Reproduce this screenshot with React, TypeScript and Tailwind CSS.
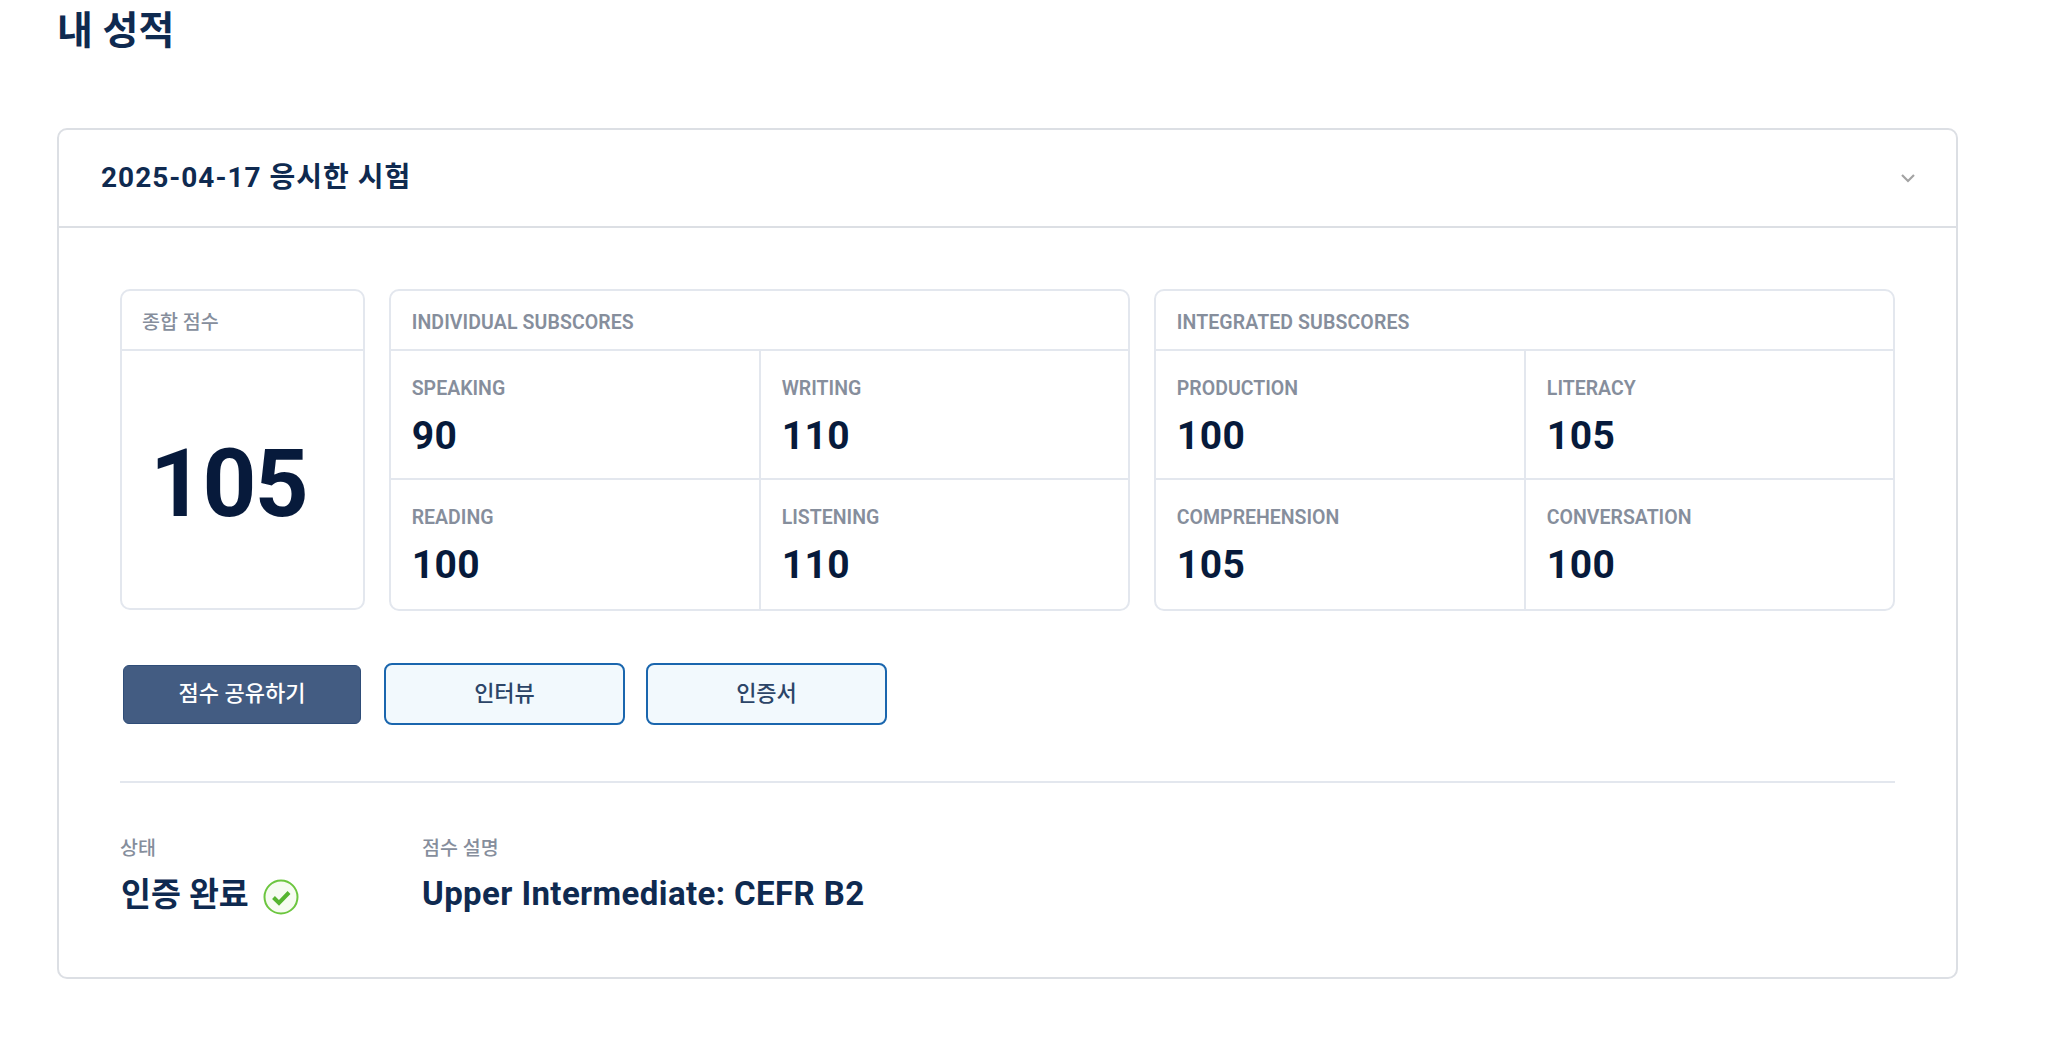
import React from "react";

const border = "border-2 border-[#e3e7ee]";

function Cell({ label, value, cls }: { label: string; value: string; cls: string }) {
  return (
    <div className={`h-[129px] pl-[21px] pt-[25px] ${cls}`}>
      <div className="text-[19.5px] leading-[26px] font-semibold text-[#868e9c]">{label}</div>
      <div className="mt-[9px] text-[39px] leading-[50px] font-bold tracking-[0.4px] text-[#071a3b]">{value}</div>
    </div>
  );
}

function ScoreBox({ title, items, cls }: { title: string; items: [string, string][]; cls: string }) {
  return (
    <div className={`${cls} rounded-[10px] ${border}`}>
      <div className="h-[60px] border-b-2 border-[#e3e7ee] pl-[21px] pt-[19px] text-[19.5px] leading-[26px] font-semibold tracking-[0.1px] text-[#868e9c]">
        {title}
      </div>
      <div className="grid grid-cols-[370px_1fr]">
        <Cell label={items[0][0]} value={items[0][1]} cls="border-r-2 border-b-2 border-[#e3e7ee]" />
        <Cell label={items[1][0]} value={items[1][1]} cls="border-b-2 border-[#e3e7ee]" />
        <Cell label={items[2][0]} value={items[2][1]} cls="border-r-2 border-[#e3e7ee]" />
        <Cell label={items[3][0]} value={items[3][1]} cls="" />
      </div>
    </div>
  );
}

export default function App() {
  return (
    <div className="h-[1049px] overflow-hidden bg-white pl-[57px] pr-[90px] font-['Roboto','Noto_Sans_CJK_KR',sans-serif]">
      <h1 className="pt-[7px] text-[39px] leading-[48px] font-bold text-[#0f2a50]">내 성적</h1>
      <div className="mt-[73px] h-[851px] rounded-[10px] border-2 border-[#dcdfe4]">
        <div className="flex h-[98px] items-center justify-between border-b-2 border-[#dcdfe4] pl-[42px] pr-[40px]">
          <span className="text-[28px] font-bold tracking-[1px] text-[#0f2a50]">2025-04-17 응시한 시험</span>
          <svg width="16" height="10" viewBox="0 0 16 10" fill="none" stroke="#a3a3a3" strokeWidth="2.2">
            <path d="M2 2l6 6 6-6" />
          </svg>
        </div>
        <div className="px-[61px] pt-[61px]">
          <div className="flex gap-[24px]">
            <div className={`h-[321px] w-[245px] rounded-[10px] ${border}`}>
              <div className="h-[60px] border-b-2 border-[#e3e7ee] pl-[20px] pt-[19px] text-[19.5px] leading-[26px] font-medium text-[#868e9c]">
                종합 점수
              </div>
              <div className="pl-[28px] pt-[83px] text-[94px] leading-[100px] font-bold tracking-[-1.5px] text-[#071a3b]">105</div>
            </div>
            <ScoreBox
              cls="w-[742px]"
              title="INDIVIDUAL SUBSCORES"
              items={[["SPEAKING", "90"], ["WRITING", "110"], ["READING", "100"], ["LISTENING", "110"]]}
            />
            <ScoreBox
              cls="w-[742px]"
              title="INTEGRATED SUBSCORES"
              items={[["PRODUCTION", "100"], ["LITERACY", "105"], ["COMPREHENSION", "105"], ["CONVERSATION", "100"]]}
            />
          </div>
          <div className="mt-[52px] flex items-center">
            <button className="ml-[3px] h-[59px] w-[238px] rounded-[6px] border border-[#2f4d78] bg-[#435c82] pb-[2px] text-[22px] font-medium text-white">
              점수 공유하기
            </button>
            <button className="ml-[23px] h-[62px] w-[241px] rounded-[8px] border-2 border-[#1a66ae] bg-[#f2f9fd] pb-[2px] text-[22px] font-medium text-[#2c4568]">
              인터뷰
            </button>
            <button className="ml-[21px] h-[62px] w-[241px] rounded-[8px] border-2 border-[#1a66ae] bg-[#f2f9fd] pb-[2px] text-[22px] font-medium text-[#2c4568]">
              인증서
            </button>
          </div>
          <div className="mt-[56px] border-t-2 border-[#e3e7ee]" />
          <div className="mt-[53px] flex">
            <div className="w-[302px]">
              <div className="text-[19.5px] leading-[26px] font-medium text-[#868e9c]">상태</div>
              <div className="mt-[11px] flex h-[44px] items-center pl-[1px] text-[32.5px] font-bold text-[#0f2a50]">
                인증 완료
                <svg className="ml-[14px] mt-[3px]" width="36" height="36" viewBox="0 0 36 36" fill="none">
                  <circle cx="18" cy="18" r="16.5" fill="#f6fcf1" stroke="#6cc63f" strokeWidth="2" />
                  <path d="M10.5 18.5l5.5 5.5 10-10.5" stroke="#55b52f" strokeWidth="4" />
                </svg>
              </div>
            </div>
            <div>
              <div className="text-[19.5px] leading-[26px] font-medium text-[#868e9c]">점수 설명</div>
              <div className="mt-[10px] flex h-[44px] items-center text-[33px] font-bold tracking-[0.4px] text-[#0f2a50]">
                Upper Intermediate: CEFR B2
              </div>
            </div>
          </div>
        </div>
      </div>
    </div>
  );
}
